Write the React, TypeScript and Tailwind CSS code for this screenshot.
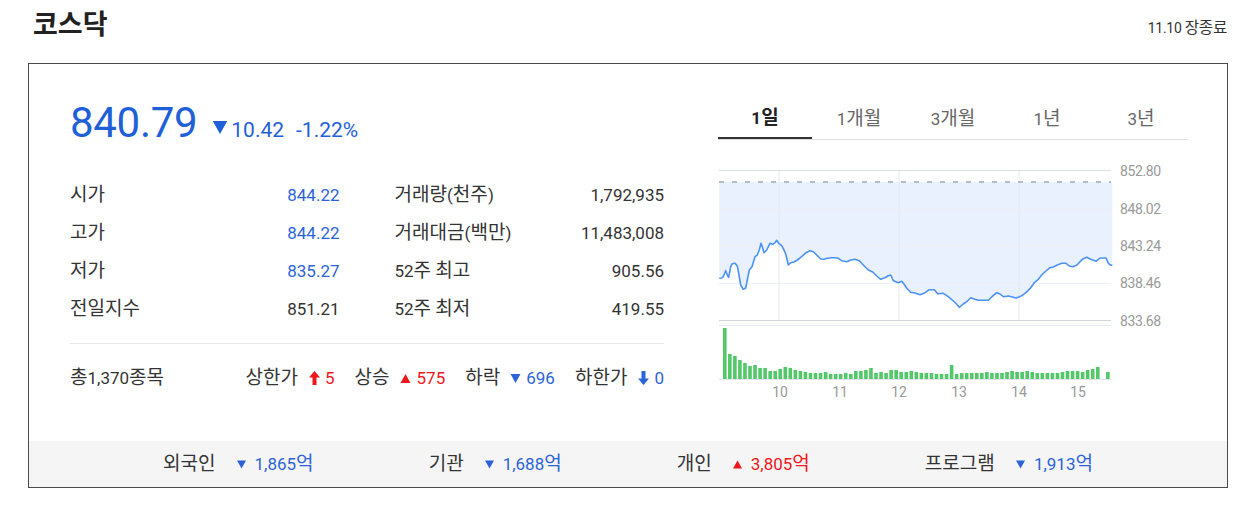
import type { ReactNode } from "react"

const FONT = "font-['Roboto','Noto_Sans_CJK_KR',sans-serif]"

// chart coordinates traced from the reference, in 3x zoom units of the (700,200) crop
const LINE: [number, number][] = [
  [58, 235], [65, 234], [70, 230], [77, 212], [83, 228], [86, 232], [92, 200], [97, 191], [105, 190], [112, 198],
  [116, 220], [122, 255], [130, 268], [137, 264], [142, 240], [148, 210], [156, 200], [165, 170], [172, 165], [178, 150],
  [183, 130], [187, 140], [192, 158], [200, 150], [210, 130], [218, 133], [225, 128], [230, 121], [236, 130], [245, 137],
  [252, 150], [258, 165], [265, 195], [272, 188], [282, 186], [292, 180], [305, 170], [318, 158], [330, 152], [340, 155],
  [350, 165], [362, 177], [372, 178], [382, 175], [395, 173], [405, 173], [415, 175], [425, 182], [440, 185], [452, 180],
  [465, 178], [478, 182], [490, 195], [505, 210], [518, 216], [530, 228], [542, 238], [555, 233], [565, 227], [572, 225],
  [580, 242], [595, 248], [605, 244], [612, 252], [620, 265], [632, 277], [645, 279], [660, 284], [672, 280], [688, 269],
  [703, 269], [713, 281], [730, 280], [745, 290], [760, 303], [770, 313], [778, 322], [790, 312], [800, 305], [812, 293],
  [825, 298], [835, 301], [865, 301], [876, 290], [890, 278], [900, 282], [910, 290], [925, 288], [940, 292], [948, 294],
  [962, 289], [975, 280], [990, 266], [1003, 248], [1015, 238], [1025, 225], [1038, 213], [1050, 203], [1060, 201], [1072, 195],
  [1085, 190], [1098, 190], [1108, 198], [1118, 200], [1130, 196], [1140, 185], [1150, 176], [1160, 172], [1172, 178], [1188, 184],
  [1200, 174], [1218, 174], [1225, 190], [1233, 196], [1237, 195],
]

const VOLUME = [
  51, 25, 23, 19, 16, 13, 14, 11, 11, 8, 8, 10, 12, 11, 9, 8, 7, 6, 6, 6,
  7, 5, 5, 5, 6, 5, 8, 8, 9, 11, 6, 7, 6, 9, 9, 7, 7, 8, 7, 6,
  6, 6, 5, 5, 5, 14, 5, 6, 6, 6, 6, 6, 7, 6, 6, 6, 7, 8, 7, 7,
  8, 7, 6, 6, 6, 6, 6, 7, 8, 8, 8, 7, 9, 10, 12, 0, 7,
]

const toLocal = ([x, y]: [number, number]): [number, number] => [x / 3 - 18, y / 3 + 40]

const Y_LABELS: [string, number][] = [
  ["852.80", 10.7],
  ["848.02", 49.3],
  ["843.24", 85.7],
  ["838.46", 123.3],
  ["833.68", 160.7],
]

const X_LABELS: [string, number][] = [
  ["10", 62],
  ["11", 122],
  ["12", 181],
  ["13", 241],
  ["14", 301],
  ["15", 360],
]

// hangul in the reference runs wider than the digits; bump it up a little
const Ko = ({ text }: { text: string }) => (
  <>
    {text.split(/([\uac00-\ud7a3]+)/).map((part, i) =>
      /[\uac00-\ud7a3]/.test(part) ? (
        <span key={i} className="text-[1.12em]">
          {part}
        </span>
      ) : (
        part
      ),
    )}
  </>
)

const PriceChart = () => {
  const pts = LINE.map(toLocal)
  const line = pts.map(([x, y]) => `${x.toFixed(1)},${y.toFixed(1)}`).join(" ")
  const first = pts[0]
  const last = pts[pts.length - 1]
  const area = `${first[0].toFixed(1)},22 ${line} ${last[0].toFixed(1)},22`

  return (
    <svg width="509" height="245" viewBox="0 0 509 245" className="block">
      <polygon points={area} fill="#e8f1fd" />
      {[49.3, 85.7, 123.3].map((y) => (
        <line key={y} x1="1" x2="393" y1={y} y2={y} stroke="#edf0f4" strokeWidth="1" />
      ))}
      {[61, 181, 301].map((x) => (
        <line key={x} x1={x} x2={x} y1="10" y2="160" stroke="#e4e8ee" strokeWidth="1" />
      ))}
      <line x1="1" x2="393" y1="10.5" y2="10.5" stroke="#d9dfe7" strokeWidth="1" />
      <line x1="1" x2="393" y1="22" y2="22" stroke="#b4bcc7" strokeWidth="2" strokeDasharray="5 8" />
      <polyline points={line} fill="none" stroke="#4b92f4" strokeWidth="1.6" strokeLinejoin="round" />
      <line x1="1" x2="393" y1="160.5" y2="160.5" stroke="#cfd3d8" strokeWidth="1" />
      <line x1="1" x2="393" y1="165.5" y2="165.5" stroke="#e4e7eb" strokeWidth="1" />
      {VOLUME.map((h, i) =>
        h > 0 ? (
          <rect key={i} x={5 + i * 5.04} y={219 - h} width="3.6" height={h} fill="#52c869" />
        ) : null,
      )}
      <line x1="1" x2="393" y1="219.5" y2="219.5" stroke="#e1e4e8" strokeWidth="1" />
      {Y_LABELS.map(([t, y]) => (
        <text key={t} x="402" y={y + 5} fontSize="14" fill="#999" fontFamily="Roboto, sans-serif" letterSpacing="-0.4">
          {t}
        </text>
      ))}
      {X_LABELS.map(([t, x]) => (
        <text key={t} x={x} y="236.5" fontSize="14" fill="#999" textAnchor="middle" fontFamily="Roboto, sans-serif">
          {t}
        </text>
      ))}
    </svg>
  )
}

const TriDown = ({ className }: { className: string }) => (
  <svg viewBox="0 0 10 9" className={className}>
    <polygon points="0,0 10,0 5,9" fill="currentColor" />
  </svg>
)

const TriUp = ({ className }: { className: string }) => (
  <svg viewBox="0 0 10 9" className={className}>
    <polygon points="0,9 10,9 5,0" fill="currentColor" />
  </svg>
)

const ArrowUp = ({ className }: { className: string }) => (
  <svg viewBox="0 0 11 14" className={className}>
    <polygon points="5.5,0 11,6.5 7.5,6.5 7.5,14 3.5,14 3.5,6.5 0,6.5" fill="currentColor" />
  </svg>
)

const ArrowDown = ({ className }: { className: string }) => (
  <svg viewBox="0 0 11 14" className={className}>
    <polygon points="3.5,0 7.5,0 7.5,7.5 11,7.5 5.5,14 0,7.5 3.5,7.5" fill="currentColor" />
  </svg>
)

const StatRow = ({ label, value, valueClass }: { label: string; value: string; valueClass: string }) => (
  <div className="flex h-[38px] items-center justify-between text-[17px] leading-[24px]">
    <span className="text-[#333]">
      <Ko text={label} />
    </span>
    <span className={valueClass}>{value}</span>
  </div>
)

const Breadth = ({ label, icon, value, valueClass }: { label: string; icon: ReactNode; value: string; valueClass: string }) => (
  <div className="flex items-center">
    <span className="text-[#333]">
      <Ko text={label} />
    </span>
    <span className="ml-[11px] flex items-center">{icon}</span>
    <span className={`ml-[5px] ${valueClass}`}>{value}</span>
  </div>
)

const Investor = ({ label, up, value }: { label: string; up?: boolean; value: string }) => (
  <div className="flex items-center">
    <span className="text-[#333]">
      <Ko text={label} />
    </span>
    {up ? (
      <TriUp className="ml-[21px] h-[9px] w-[9px] text-[#f0161b]" />
    ) : (
      <TriDown className="ml-[21px] h-[9px] w-[9px] text-[#2c63d8]" />
    )}
    <span className={`ml-[9px] ${up ? "text-[#f0161b]" : "text-[#2c63d8]"}`}>
      <Ko text={value} />
    </span>
  </div>
)

const TABS = ["1일", "1개월", "3개월", "1년", "3년"]

export default function App() {
  return (
    <div className={`h-[513px] w-[1255px] bg-white ${FONT}`}>
      <div className="flex h-[50px] items-center justify-between pl-[33px] pr-[28px]">
        <h1 className="text-[27px] font-bold leading-none text-[#222]">코스닥</h1>
        <span className="mt-[6px] text-[14px] leading-[20px] tracking-[-0.3px] text-[#333]">
          <Ko text="11.10 장종료" />
        </span>
      </div>
      <div className="ml-[28px] mt-[13px] w-[1200px] border border-[#4a4a4a]">
        <div className="flex h-[377px]">
          <div className="ml-[41px] w-[594px] pt-[34px]">
            <div className="flex h-[50px] items-baseline text-[#1f5fd8]">
              <span className="text-[42px] leading-[50px] tracking-[-0.3px]">840.79</span>
              <TriDown className="ml-[15px] h-[13px] w-[16px] self-center translate-y-[4px]" />
              <span className="ml-[3px] text-[21px] leading-none">10.42</span>
              <span className="ml-[12px] text-[21px] leading-none">-1.22%</span>
            </div>
            <div className="mt-[28px] grid grid-cols-2 gap-x-[55px]">
              <div>
                <StatRow label="시가" value="844.22" valueClass="text-[#2c63d8]" />
                <StatRow label="고가" value="844.22" valueClass="text-[#2c63d8]" />
                <StatRow label="저가" value="835.27" valueClass="text-[#2c63d8]" />
                <StatRow label="전일지수" value="851.21" valueClass="text-[#333]" />
              </div>
              <div>
                <StatRow label="거래량(천주)" value="1,792,935" valueClass="text-[#333]" />
                <StatRow label="거래대금(백만)" value="11,483,008" valueClass="text-[#333]" />
                <StatRow label="52주 최고" value="905.56" valueClass="text-[#333]" />
                <StatRow label="52주 최저" value="419.55" valueClass="text-[#333]" />
              </div>
            </div>
            <div className="mt-[15px] border-t border-[#e6e6e6]" />
            <div className="mt-[15px] flex h-[38px] items-center justify-between text-[17px] leading-[24px]">
              <span className="text-[#333]">
                <Ko text="총1,370종목" />
              </span>
              <div className="flex items-center gap-[20px]">
                <Breadth
                  label="상한가"
                  icon={<ArrowUp className="h-[14px] w-[11px] text-[#f0161b]" />}
                  value="5"
                  valueClass="text-[#f0161b]"
                />
                <Breadth
                  label="상승"
                  icon={<TriUp className="-ml-[2px] h-[9px] w-[13px] text-[#f0161b]" />}
                  value="575"
                  valueClass="text-[#f0161b]"
                />
                <Breadth
                  label="하락"
                  icon={<TriDown className="-ml-[1px] h-[9px] w-[11px] text-[#2c63d8]" />}
                  value="696"
                  valueClass="text-[#2c63d8]"
                />
                <Breadth
                  label="하한가"
                  icon={<ArrowDown className="h-[14px] w-[11px] text-[#2c63d8]" />}
                  value="0"
                  valueClass="text-[#2c63d8]"
                />
              </div>
            </div>
          </div>
          <div className="ml-[54px] w-[509px] pt-[35px]">
            <div className="flex w-[470px] border-b border-[#dedede]">
              {TABS.map((t, i) => (
                <div
                  key={t}
                  className={`flex h-[40px] w-[94px] items-center justify-center text-[17px] leading-[24px] ${
                    i === 0 ? "-mb-px border-b-2 border-[#333] font-bold text-[#222]" : "text-[#666]"
                  }`}
                >
                  <span>
                    <Ko text={t} />
                  </span>
                </div>
              ))}
            </div>
            <div className="mt-[20px]">
              <PriceChart />
            </div>
          </div>
        </div>
        <div className="flex h-[46px] items-center justify-center gap-[115px] bg-[#f5f5f5] text-[17px] leading-[24px]">
          <Investor label="외국인" value="1,865억" />
          <Investor label="기관" value="1,688억" />
          <Investor label="개인" up value="3,805억" />
          <Investor label="프로그램" value="1,913억" />
        </div>
      </div>
    </div>
  )
}
